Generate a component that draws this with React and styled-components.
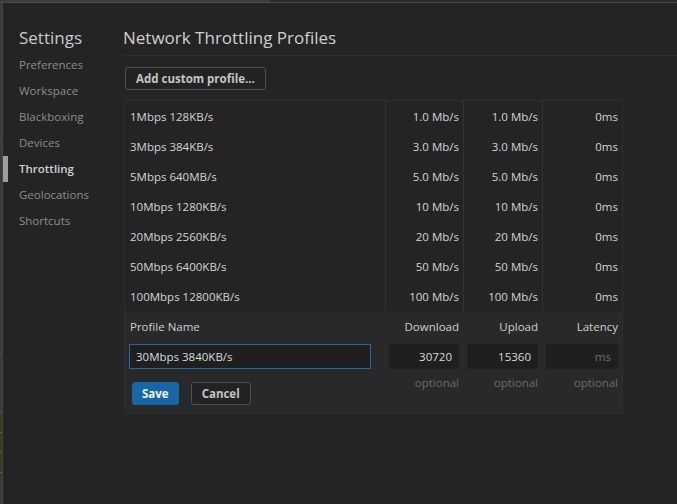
import React from "react";
import styled, { createGlobalStyle } from "styled-components";

const GlobalStyle = createGlobalStyle`
  html, body {
    margin: 0;
    padding: 0;
    background: #242424;
    font-family: "Segoe UI", "Open Sans", sans-serif;
    font-size: 11.5px;
  }
`;

const Screen = styled.div`
  width: 677px;
  height: 504px;
  display: flex;
  flex-direction: column;
  background: #3a3a3a;
  overflow: hidden;
`;

const TopStrip = styled.div`
  height: 2px;
  display: flex;
  border-bottom: 1px solid #4a4a4a;
  flex: none;
`;

const TopPart = styled.div`
  flex: ${({ grow }) => grow};
  background: ${({ tone }) => tone};
`;

const Body = styled.div`
  flex: 1;
  display: flex;
`;

const LeftStrip = styled.div`
  width: 2px;
  display: flex;
  flex-direction: column;
  border-right: 1px solid #454545;
  flex: none;
`;

const StripPart = styled.div`
  height: ${({ h }) => h}px;
  background: ${({ tone }) => tone};
  border-bottom: 1px solid ${({ line }) => line || "transparent"};
`;

const Dialog = styled.div`
  flex: 1;
  display: flex;
  background: #242424;
`;

const Sidebar = styled.nav`
  width: 120px;
  flex: none;
  display: flex;
  flex-direction: column;
`;

const SideTitle = styled.h1`
  margin: 0;
  padding: 23px 0 0 16px;
  height: 26px;
  font-size: 17px;
  font-weight: 400;
  color: #c9c9c9;
  line-height: 24px;
`;

const SideItem = styled.div`
  position: relative;
  height: 26px;
  line-height: 26px;
  padding-left: 16px;
  font-size: 11.5px;
  color: ${({ active }) => (active ? "#d2d2d2" : "#8c8c8c")};
  font-weight: ${({ active }) => (active ? 600 : 400)};

  &::before {
    content: "";
    display: ${({ active }) => (active ? "block" : "none")};
    position: absolute;
    left: 0;
    top: 0;
    width: 5px;
    height: 26px;
    background: #9e9e9e;
  }
`;

const Main = styled.main`
  flex: 1;
  display: flex;
  flex-direction: column;
`;

const Title = styled.h2`
  margin: 0;
  padding: 23px 0 0 0;
  height: 29px;
  font-size: 17px;
  font-weight: 400;
  line-height: 24px;
  color: #cfcfcf;
  border-bottom: 1px solid #2f2f2f;
`;

const Toolbar = styled.div`
  padding: 11px 0 10px 2px;
`;

const Button = styled.button`
  height: 23px;
  padding: 0 ${({ pad }) => pad || 12}px;
  border-radius: 3px;
  font-family: inherit;
  font-size: 11.5px;
  font-weight: 700;
  border: 1px solid ${({ primary }) => (primary ? "#1766a6" : "#4f4f4f")};
  background: ${({ primary }) => (primary ? "#1766a6" : "#232323")};
  color: ${({ primary }) => (primary ? "#f2f2f2" : "#c4c4c4")};
  cursor: pointer;
`;

const Table = styled.div`
  width: 497px;
  margin-left: 1px;
  border: 1px solid #2f2f2f;
`;

const cols = "260px 78px 79px 80px";

const Row = styled.div`
  display: grid;
  grid-template-columns: ${cols};
  height: 30px;
`;

const Cell = styled.div`
  line-height: 29px;
  padding: 1px 4px 0 5px;
  color: #d4d4d4;
  text-align: ${({ right }) => (right ? "right" : "left")};
  border-left: ${({ sep }) => (sep ? "1px solid #333" : "none")};
  white-space: nowrap;
`;

const Editor = styled.div`
  display: grid;
  grid-template-columns: ${cols};
  grid-template-rows: 30px 28px auto;
  background: #292929;
  padding-bottom: 8px;
`;

const Label = styled.div`
  line-height: 29px;
  padding: 1px 4px 0 5px;
  color: #cfcfcf;
  text-align: ${({ right }) => (right ? "right" : "left")};
`;

const Field = styled.input`
  box-sizing: border-box;
  margin: 3px ${({ mr }) => mr || 4}px 0 4px;
  height: 25px;
  width: calc(100% - ${({ mr }) => (mr || 4) + 4}px);
  font-family: inherit;
  font-size: 11.5px;
  color: #dadada;
  background: #1f1f1f;
  border: 1px solid ${({ focus }) => (focus ? "#1d6aa5" : "#1f1f1f")};
  padding: 0 6px;
  text-align: ${({ right }) => (right ? "right" : "left")};
  outline: none;

  &::placeholder {
    color: #707070;
  }
`;

const Hint = styled.div`
  padding: 5px 4px 0;
  line-height: 18px;
  text-align: right;
  color: #6b6b6b;
`;

const Actions = styled.div`
  display: flex;
  gap: 12px;
  padding: 13px 0 0 7px;
`;

const profiles = [
  ["1Mbps 128KB/s", "1.0 Mb/s", "1.0 Mb/s", "0ms"],
  ["3Mbps 384KB/s", "3.0 Mb/s", "3.0 Mb/s", "0ms"],
  ["5Mbps 640MB/s", "5.0 Mb/s", "5.0 Mb/s", "0ms"],
  ["10Mbps 1280KB/s", "10 Mb/s", "10 Mb/s", "0ms"],
  ["20Mbps 2560KB/s", "20 Mb/s", "20 Mb/s", "0ms"],
  ["50Mbps 6400KB/s", "50 Mb/s", "50 Mb/s", "0ms"],
  ["100Mbps 12800KB/s", "100 Mb/s", "100 Mb/s", "0ms"],
];

const nav = [
  "Preferences",
  "Workspace",
  "Blackboxing",
  "Devices",
  "Throttling",
  "Geolocations",
  "Shortcuts",
];

export default function App() {
  return (
    <>
      <GlobalStyle />
      <Screen>
        <TopStrip>
          <TopPart grow={270} tone="#3c3c3c" />
          <TopPart grow={407} tone="#2c2c2c" />
        </TopStrip>
        <Body>
          <LeftStrip>
            <StripPart h={62} tone="#3a3a3a" />
            <StripPart h={76} tone="#3a3a3a" line="#4a4a4a" />
            <StripPart h={64} tone="#3a3a3a" />
            <StripPart h={144} tone="#3b3b3b" line="#4c4c4c" />
            <StripPart h={59} tone="#3b3b3b" line="#555" />
            <StripPart h={19} tone="#3d3a22" line="#6a5d1c" />
            <StripPart h={19} tone="#3d3a22" line="#6a5d1c" />
            <StripPart h={19} tone="#3d3a22" line="#6a5d1c" />
            <StripPart h={40} tone="#3a3a3a" />
          </LeftStrip>
          <Dialog>
            <Sidebar>
              <SideTitle>Settings</SideTitle>
              {nav.map((n) => (
                <SideItem key={n} active={n === "Throttling"}>
                  {n}
                </SideItem>
              ))}
            </Sidebar>
            <Main>
              <Title>Network Throttling Profiles</Title>
              <Toolbar>
                <Button pad={10}>Add custom profile...</Button>
              </Toolbar>
              <Table>
                {profiles.map(([name, down, up, lat]) => (
                  <Row key={name}>
                    <Cell>{name}</Cell>
                    <Cell right sep>{down}</Cell>
                    <Cell right sep>{up}</Cell>
                    <Cell right sep>{lat}</Cell>
                  </Row>
                ))}
                <Editor>
                  <Label>Profile Name</Label>
                  <Label right>Download</Label>
                  <Label right>Upload</Label>
                  <Label right>Latency</Label>
                  <Field focus mr={14} defaultValue="30Mbps 3840KB/s" />
                  <Field right defaultValue="30720" />
                  <Field right defaultValue="15360" />
                  <Field right placeholder="ms" />
                  <Actions>
                    <Button primary pad={9}>Save</Button>
                    <Button pad={10}>Cancel</Button>
                  </Actions>
                  <Hint>optional</Hint>
                  <Hint>optional</Hint>
                  <Hint>optional</Hint>
                </Editor>
              </Table>
            </Main>
          </Dialog>
        </Body>
      </Screen>
    </>
  );
}
